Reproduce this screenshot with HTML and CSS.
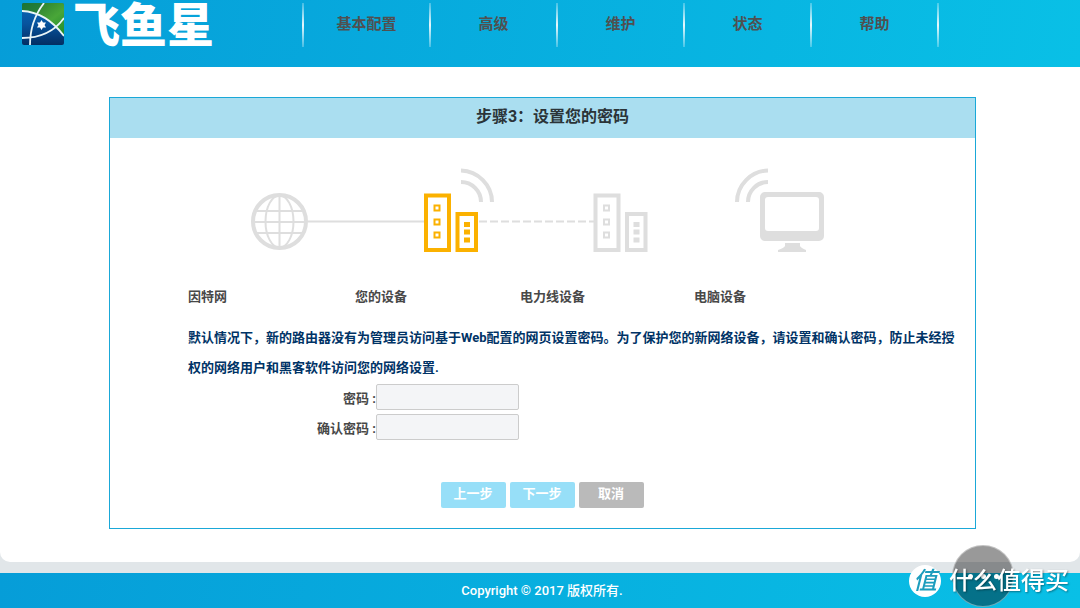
FILE: index.html
```
<!DOCTYPE html>
<html lang="zh-CN">
<head>
<meta charset="utf-8">
<meta name="viewport" content="width=device-width, initial-scale=1">
<title>飞鱼星</title>
<link rel="stylesheet" href="styles.css">
</head>
<body>
<header class="header">
  <a class="brand" href="#">
    <svg class="brand-mark" viewBox="0 0 42 42" aria-hidden="true">
      <defs>
        <linearGradient id="sea" x1="0" y1="0" x2="0" y2="1"><stop offset="0" stop-color="#0b68b8"/><stop offset=".5" stop-color="#07539d"/><stop offset="1" stop-color="#032e63"/></linearGradient>
        <linearGradient id="leaf" x1="0" y1="0" x2="1" y2="1"><stop offset="0" stop-color="#1d6b2c"/><stop offset=".6" stop-color="#49a638"/><stop offset="1" stop-color="#1c8a2c"/></linearGradient>
        <clipPath id="tile"><rect width="42" height="42" rx="2"/></clipPath>
      </defs>
      <g clip-path="url(#tile)">
        <rect width="42" height="42" fill="url(#sea)"/>
        <path d="M0 8Q24 9 42 33V0H0Z" fill="url(#leaf)"/>
        <path d="M0 8Q10 8 15 11L22 0H0Z" fill="#1d7a3c" opacity=".6"/>
        <path d="M8 42Q8 18 22 0M0 8Q24 9 42 33M0 35Q28 35 42 15" fill="none" stroke="#e9f5f7" stroke-width="1.8"/>
        <path d="M19.500 17l1.500 2.600h3L22.500 22l1.500 2.500h-3l-1.500 2.500-1.500-2.500h-3l1.500-2.500-1.500-2.400h3z" fill="#fff"/>
      </g>
    </svg>
    <span class="brand-name">飞鱼星</span>
  </a>
  <nav class="nav">
    <a href="#">基本配置</a>
    <a href="#">高级</a>
    <a href="#">维护</a>
    <a href="#">状态</a>
    <a href="#">帮助</a>
  </nav>
</header>
<main class="main">
  <section class="panel">
    <h1 class="panel-title">步骤3：设置您的密码</h1>
    <form class="panel-body">
      <svg class="diagram" viewBox="0 0 576 86" width="576" height="86" aria-hidden="true">
        <g fill="none" stroke="#dedede">
          <circle cx="29.500" cy="53.500" r="26.500" stroke-width="4"/>
          <path d="M29.500 28v52M3 54h52M7 43h45M7 65h45" stroke-width="2"/>
          <ellipse cx="29.500" cy="53.500" rx="14" ry="26" stroke-width="2"/>
          <path d="M58 53.500h116" stroke-width="2"/>
          <path d="M229 53.500h115" stroke-width="2" stroke-dasharray="8 3"/>
          <path d="M211 2.500C228 3 242 17 242 34M211 14C222 14 231 23 231 34" stroke-width="4"/>
          <path d="M518 2.500C501 3 487 17 487 34M518 14C507 14 498 23 498 34" stroke-width="4"/>
        </g>
        <g fill="none" stroke="#fbb100">
          <path d="M176 27.500h23v54.500h-23zM207.500 46h18.500v36h-18.500z" stroke-width="4"/>
          <path d="M184.500 37.500h5v5h-5zM184.500 51.500h5v5h-5zM184.500 64.500h5v5h-5z" stroke-width="2"/>
          <path d="M214 54h6v5h-6zM214 61.500h6v5h-6zM214 69.500h6v5h-6z" fill="#fbb100" stroke="none"/>
        </g>
        <g fill="none" stroke="#dedede">
          <path d="M345.500 27.500h23v54.500h-23zM377 46h18.500v36h-18.500z" stroke-width="4"/>
          <path d="M354 37.500h5v5h-5zM354 51.500h5v5h-5zM354 64.500h5v5h-5z" stroke-width="2"/>
          <path d="M383.500 54h6v5h-6zM383.500 61.500h6v5h-6zM383.500 69.500h6v5h-6z" fill="#dedede" stroke="none"/>
        </g>
        <path fill="#dedede" fill-rule="evenodd" d="M515 24h54a5 5 0 0 1 5 5v39a5 5 0 0 1-5 5h-54a5 5 0 0 1-5-5V29a5 5 0 0 1 5-5zM518 29a3 3 0 0 0-3 3v28a3 3 0 0 0 3 3h48a3 3 0 0 0 3-3V32a3 3 0 0 0-3-3zM535 75h15v3q1 2 6 4v2h-28v-2q6-2 7-4z"/>
      </svg>
      <div class="stages">
        <span>因特网</span><span>您的设备</span><span>电力线设备</span><span>电脑设备</span>
      </div>
      <p class="intro">默认情况下，新的路由器没有为管理员访问基于Web配置的网页设置密码。为了保护您的新网络设备，请设置和确认密码，防止未经授权的网络用户和黑客软件访问您的网络设置.</p>
      <div class="fields">
        <label for="pw">密码 :</label><input id="pw" type="password">
        <label for="pw2">确认密码 :</label><input id="pw2" type="password">
      </div>
      <div class="actions">
        <button type="button">上一步</button>
        <button type="button">下一步</button>
        <button type="button" class="cancel">取消</button>
      </div>
    </form>
  </section>
</main>
<footer class="footer">Copyright © 2017 版权所有.</footer>
<button type="button" class="float-menu" aria-label="菜单"><i></i><i></i><i></i></button>
<div class="watermark"><span class="watermark-badge">值</span><span>什么值得买</span></div>
</body>
</html>
```
FILE: styles.css
```
* { box-sizing: border-box; }
body {
  margin: 0;
  min-height: 100vh;
  display: flex;
  flex-direction: column;
  background: #e1e6e9;
  color: #484848;
  font: 500 13px/20px Roboto, "Noto Sans CJK SC", sans-serif;
}
a { color: inherit; text-decoration: none; }
.header, .footer { background: linear-gradient(100deg, #069dd8, #09c0e6); }
.header {
  display: flex;
  align-items: flex-start;
  height: 67px;
  padding: 3px 0 0 22px;
}
.brand { display: flex; gap: 9px; width: 280px; }
.brand-mark { width: 42px; height: 42px; }
.brand-name { color: #fff; font-size: 47px; line-height: 46px; font-weight: 900; }
.nav { display: flex; }
.nav a {
  width: 127px;
  height: 44px;
  padding-left: 2px;
  color: #505050;
  font-size: 15px;
  line-height: 42px;
  font-weight: 700;
  text-align: center;
  background: linear-gradient(rgba(255,255,255,.25), rgba(255,255,255,.9), rgba(255,255,255,.25)) left / 2px 100% no-repeat;
}
.nav a:last-child {
  width: 129px;
  padding-right: 2px;
  background:
    linear-gradient(rgba(255,255,255,.25), rgba(255,255,255,.9), rgba(255,255,255,.25)) left / 2px 100% no-repeat,
    linear-gradient(rgba(255,255,255,.25), rgba(255,255,255,.9), rgba(255,255,255,.25)) right / 2px 100% no-repeat;
}
.main {
  flex: 1;
  margin-bottom: 11px;
  padding: 30px 104px 32px 109px;
  background: #fff;
  border-radius: 0 0 10px 10px;
}
.panel { border: 1px solid #1aa8d8; }
.panel-title {
  margin: 0;
  padding-left: 20px;
  background: #aadef0;
  color: #2b3438;
  font-size: 16px;
  line-height: 38px;
  padding-bottom: 2px;
  font-weight: 700;
  text-align: center;
}
.panel-body { padding: 30px 16px 20px 78px; }
.diagram { display: block; margin-left: 62px; }
.stages {
  display: grid;
  grid-template-columns: 167px 165px 174px 1fr;
  margin: 33px 0 16px;
  font-weight: 700;
}
.intro { margin: 0; color: #036; line-height: 30px; font-weight: 700; }
.fields {
  display: grid;
  grid-template-columns: 188px 143px;
  row-gap: 4px;
  align-items: center;
  margin-top: 1px;
  text-align: right;
  font-weight: 700;
}
.fields label { padding-top: 3px; }
.fields input {
  width: 100%;
  height: 26px;
  padding: 0 6px;
  border: 1px solid #ccc;
  border-radius: 2px;
  background: #f4f5f7;
  font: inherit;
}
.actions {
  display: flex;
  justify-content: center;
  gap: 4px;
  margin: 42px 0 0 -63px;
}
.actions button {
  width: 65px;
  height: 26px;
  padding: 0 0 2px;
  border: 0;
  border-radius: 2px;
  background: #97dff8;
  color: #fff;
  font: inherit;
  font-weight: 700;
}
.actions .cancel { background: #bababa; }
.footer {
  padding-left: 4px;
  color: #fff;
  line-height: 35px;
  text-align: center;
}
.float-menu {
  position: fixed;
  right: 66px;
  bottom: 1px;
  display: flex;
  justify-content: center;
  align-items: center;
  gap: 8px;
  width: 62px;
  height: 62px;
  padding: 0;
  border: 1px solid rgba(255,255,255,.4);
  border-radius: 50%;
  background: rgba(0,0,0,.4);
}
.float-menu i { width: 5px; height: 5px; border-radius: 50%; background: #fff; }
.watermark {
  position: fixed;
  right: 11px;
  bottom: 11px;
  display: flex;
  align-items: center;
  gap: 8px;
  color: #fff;
  font-size: 24px;
  line-height: 32px;
  text-shadow: 1px 1px 2px rgba(0,0,0,.4);
  pointer-events: none;
}
.watermark-badge {
  width: 32px;
  height: 32px;
  border-radius: 50%;
  background: #fff;
  color: #1d9dbd;
  font-style: italic;
  text-align: center;
  text-shadow: none;
}
```
